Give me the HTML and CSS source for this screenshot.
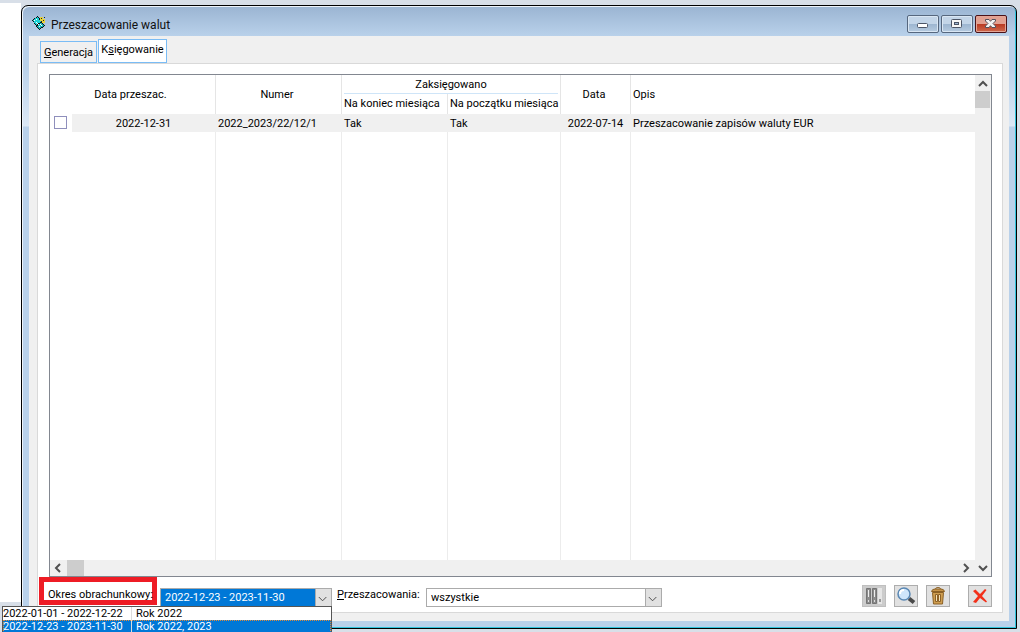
FILE: index.html
```html
<!DOCTYPE html>
<html lang="pl">
<head>
<meta charset="utf-8">
<title>Przeszacowanie walut</title>
<link rel="stylesheet" href="styles.css">
</head>
<body>
<div class="desktop">
  <div class="backdrop"></div>
  <main class="window">
    <header class="titlebar">
      <svg class="app-icon" width="14" height="16" viewBox="0 0 14 16" shape-rendering="crispEdges">
        <path d="M0 5L6 1L10 7L13 11L7 15L4 11Z" fill="#111"/>
        <path d="M1 5L6 2L9 7L4 10Z" fill="#19d3d6"/>
        <path d="M5 11L9 8L12 11L7 14Z" fill="#16b5bb"/>
        <path d="M2 5h1v1h-1zM4 4h1v1h-1zM4 7h1v1h-1zM6 9h1v1h-1zM7 11h1v1h-1zM9 10h1v1h-1zM5 8h1v1h-1zM8 9h1v1h-1z" fill="#fff"/>
        <path d="M8 2h3v2h2v4h-3v-2h-2z" fill="#e8d33a"/>
        <path d="M9 3h1v1h-1zM11 5h1v1h-1zM9 6h1v1h-1zM12 2h1v1h-1z" fill="#222"/>
      </svg>
      <h1 class="title">Przeszacowanie walut</h1>
      <div class="window-buttons">
        <button class="wbtn" type="button" aria-label="Minimalizuj">
          <svg width="12" height="12" viewBox="0 0 12 12"><rect x="0.500" y="5.500" width="10" height="4" rx="1" fill="#fff" stroke="#4c5566"/></svg>
        </button>
        <button class="wbtn" type="button" aria-label="Maksymalizuj">
          <svg width="12" height="12" viewBox="0 0 12 12"><rect x="0.500" y="1.500" width="10" height="8" rx="1" fill="#f7f7f7" stroke="#4c5566"/><rect x="3.500" y="4.500" width="4" height="2" fill="#9db6d3" stroke="#4c5566"/></svg>
        </button>
        <button class="wbtn wbtn-close" type="button" aria-label="Zamknij">
          <svg width="12" height="12" viewBox="0 0 12 12"><path d="M0.500 1.500h3.500L5.500 3.300L7 1.500H10.500V3L8 5.500L10.500 8v1.500H7L5.500 7.700L4 9.500H0.500V8L3 5.500L0.500 3Z" fill="#f4f4f4" stroke="#54515c"/></svg>
        </button>
      </div>
    </header>
    <div class="client">
      <nav class="tabs">
        <button class="tab" type="button"><u>G</u>eneracja</button>
        <button class="tab tab-active" type="button">K<u>s</u>ięgowanie</button>
      </nav>
      <section class="panel">
        <div class="list">
          <div class="list-main">
            <table class="grid">
              <colgroup>
                <col class="c-check"><col class="c-date"><col class="c-number"><col class="c-end"><col class="c-start"><col class="c-day"><col>
              </colgroup>
              <thead>
                <tr class="head-top">
                  <th colspan="2" rowspan="2" class="wide">Data przeszac.</th>
                  <th rowspan="2" class="number">Numer</th>
                  <th colspan="2" class="group"><span>Zaksięgowano</span></th>
                  <th rowspan="2" class="number">Data</th>
                  <th rowspan="2" class="left">Opis</th>
                </tr>
                <tr class="head-sub">
                  <th class="left">Na koniec miesiąca</th>
                  <th class="left">Na początku miesiąca</th>
                </tr>
              </thead>
              <tbody>
                <tr class="record">
                  <td class="check"><input type="checkbox" aria-label="Zaznacz 2022_2023/22/12/1"></td>
                  <td class="center">2022-12-31</td>
                  <td>2022_2023/22/12/1</td>
                  <td>Tak</td>
                  <td>Tak</td>
                  <td class="center">2022-07-14</td>
                  <td>Przeszacowanie zapisów waluty EUR</td>
                </tr>
                <tr class="filler"><td></td><td></td><td></td><td></td><td></td><td></td><td></td></tr>
              </tbody>
            </table>
            <div class="hscroll">
              <svg width="17" height="16" viewBox="0 0 17 16"><path d="M10 4L6 8L10 12" class="chev"/></svg>
              <span class="thumb-h"></span>
              <svg class="push" width="17" height="16" viewBox="0 0 17 16"><path d="M6 4L10 8L6 12" class="chev"/></svg>
            </div>
          </div>
          <div class="vscroll">
            <svg width="16" height="16" viewBox="0 0 16 16"><path d="M4 11L8 7L12 11" class="chev"/></svg>
            <span class="thumb-v"></span>
            <svg class="push-down" width="16" height="17" viewBox="0 0 16 17"><path d="M4 7L8 11L12 7" class="chev"/></svg>
          </div>
        </div>
        <footer class="bar">
          <label class="marked" for="period">Okres obrachunkowy:</label>
          <div class="combo combo-period">
            <select id="period" class="select select-on">
              <option>2022-12-23 - 2023-11-30</option>
              <option>2022-01-01 - 2022-12-22</option>
            </select>
            <svg class="arrow" width="16" height="17" viewBox="0 0 16 17"><path d="M3 8L7 12L11 8"/></svg>
            <div class="dropdown" role="listbox" aria-label="Okres obrachunkowy">
              <div class="choice" role="option"><span>2022-01-01 - 2022-12-22</span><span class="note">Rok 2022</span></div>
              <div class="choice choice-on" role="option" aria-selected="true"><span>2022-12-23 - 2023-11-30</span><span class="note">Rok 2022, 2023</span></div>
            </div>
          </div>
          <label class="filter-label" for="filter"><u>P</u>rzeszacowania:</label>
          <div class="combo combo-filter">
            <select id="filter" class="select"><option>wszystkie</option></select>
            <svg class="arrow" width="16" height="17" viewBox="0 0 16 17"><path d="M3 8L7 12L11 8"/></svg>
          </div>
          <div class="tools">
            <button class="tool tool-off" type="button" aria-label="Księguj" disabled>
              <svg width="18" height="18" viewBox="0 0 18 18">
                <path d="M1.500 1.500h4v15h-4zM7.500 1.500h4v15h-4z" fill="#8c8c8c" stroke="#747474"/>
                <path d="M13 1h4v16h-4z" fill="#e6e6e6"/>
                <path d="M3 3h1v7h-1zM9 3h1v7h-1z" fill="#eee"/>
                <path d="M3 13h1v2h-1zM9 13h1v2h-1z" fill="#ddd"/><path d="M14 12h2v3h-2z" fill="#999"/>
              </svg>
            </button>
            <button class="tool" type="button" aria-label="Podgląd">
              <svg width="20" height="20" viewBox="0 0 20 20">
                <path d="M13 12.500L18 16.500" stroke="#4a4a4a" stroke-width="4"/>
                <circle cx="8" cy="8" r="6" fill="#cfe6fb" stroke="#5a88b4" stroke-width="1.500"/>
                <path d="M4 8Q4 4 8 4" fill="none" stroke="#fff" stroke-width="2"/>
              </svg>
            </button>
            <button class="tool" type="button" aria-label="Usuń">
              <svg width="18" height="20" viewBox="0 0 18 20">
                <path d="M6.500 3Q6.500 1.500 9 1.500T11.500 3" fill="none" stroke="#8c6125"/>
                <path d="M2.500 5.500Q3 3 6 3h6q3 0 3.500 2.500z" fill="#c79549" stroke="#8c6125"/>
                <path d="M3.500 6.500h11l-1 11.500h-9z" fill="#cf9e50" stroke="#8c6125"/>
                <path d="M6.500 8.500h2v7h-2zM9.500 8.500h2v7h-2z" fill="#f6e2b8" stroke="#8c6125"/>
              </svg>
            </button>
            <button class="tool tool-close" type="button" aria-label="Zamknij okno">
              <svg width="18" height="18" viewBox="0 0 18 18">
                <path d="M2 4L4.500 2.500L9 7L14 2L15.500 3L11 9L16 14.500L15 15.500L9 11L5 16L2 15L7 9Z" fill="#f2301a"/>
              </svg>
            </button>
          </div>
        </footer>
      </section>
    </div>
  </main>
</div>
</body>
</html>
```
FILE: styles.css
```css
* { box-sizing: border-box; }

body {
  margin: 0;
  background: #d8dfe8;
  color: #000;
  font: 11px/14px Roboto, "Liberation Sans", sans-serif;
}

button, select, input { font: inherit; color: inherit; margin: 0; padding: 0; }

.desktop { display: flex; height: 100vh; overflow: hidden; }
.backdrop { width: 21px; margin: 3px 0 30px; background: #fff; }

.window {
  flex: 1;
  min-width: 0;
  display: flex;
  flex-direction: column;
  margin: 5px 3px 3px 0;
  padding: 0 7px 7px 7px;
  border: 1px solid #000;
  border-radius: 7px 7px 0 0;
  background: linear-gradient(#9ab4d2, #b9d1ea 30px, #b9d1ea 60px, #dce8f5 120px, #b9d1ea 121px);
  box-shadow: inset 1px 1px #eef4fa, inset -1px -1px #2fc3dc;
}

.titlebar { display: flex; align-items: flex-start; height: 30px; padding: 9px 2px 0 3px; }
.app-icon { margin-right: 5px; }
.title { margin: 2px 0 0; font: 12px/16px Roboto, "Liberation Sans", sans-serif; color: #111; }
.window-buttons { display: flex; gap: 2px; margin-left: auto; }
.wbtn {
  display: flex;
  align-items: center;
  justify-content: center;
  width: 32px;
  height: 18px;
  border: 1px solid #56677e;
  border-radius: 2px;
  background: linear-gradient(#c3d5e8 50%, #9cb5d0 50%, #b6cbe0);
  box-shadow: inset 0 0 0 1px #d9e6f3;
}
.wbtn-close {
  border-color: #4b1218;
  background: linear-gradient(#e2a091 50%, #b93922 50%, #cf6a4d);
  box-shadow: inset 0 0 0 1px #e3a596;
}

.client {
  flex: 1;
  min-height: 0;
  display: flex;
  flex-direction: column;
  padding: 3px 6px 8px 8px;
  background: #f0f0f0;
}

.tabs { display: flex; align-items: flex-end; gap: 1px; padding-left: 3px; }
.tab {
  width: 57px;
  height: 22px;
  padding-top: 2px;
  border: 1px solid #7abcf5;
  background: #f0f0f0;
}
.tab-active { width: 69px; height: 24px; padding: 0 0 2px; background: #fff; }

.panel {
  flex: 1;
  min-height: 0;
  display: flex;
  flex-direction: column;
  padding: 10px 10px 0 11px;
  border: 1px solid #d9d9d9;
  background: #fff;
}

.list { flex: 1; min-height: 0; display: flex; border: 1px solid #828790; }
.list-main { flex: 1; min-width: 0; display: flex; flex-direction: column; }

.grid { flex: 1; width: 100%; table-layout: fixed; border-collapse: separate; border-spacing: 0; }
.c-check { width: 22px; }
.c-date { width: 144px; }
.c-number { width: 126px; }
.c-end { width: 106px; }
.c-start { width: 113px; }
.c-day { width: 70px; }
.grid th, .grid td {
  padding: 0 2px;
  border-right: 1px solid #e5e5e5;
  font-weight: normal;
  text-align: left;
  white-space: nowrap;
}
.grid th { text-align: center; }
.grid th:last-child, .grid td:last-child { border-right: 0; }
.grid .left { text-align: left; }
.grid .head-sub th:last-child { border-right: 1px solid #e5e5e5; }
.grid .wide { padding-right: 6px; }
.grid .number { padding-right: 5px; }
.grid .center { text-align: center; }
.head-top { height: 19px; }
.group span { display: block; height: 19px; line-height: 20px; border-bottom: 1px solid #cfe5f8; }
.head-sub { height: 20px; }
.record { height: 18px; }
.grid .record td { padding-top: 2px; background: #f0f0f0; border-right-color: #f0f0f0; }
.grid .record .check { padding: 0 0 2px 4px; background: #fff; border-right: 0; }
.check input {
  display: block;
  appearance: none;
  width: 13px;
  height: 13px;
  border: 1px solid #8f8fbc;
  background: #fff;
}
.filler td { border-right-color: #ececec; }
.filler td:first-child { border-right: 0; }

.hscroll { display: flex; height: 16px; background: #f0f0f0; }
.thumb-h { width: 17px; background: #cdcdcd; }
.push { margin-left: auto; }
.vscroll { display: flex; flex-direction: column; width: 16px; background: #f0f0f0; }
.thumb-v { height: 17px; width: 15px; background: #cdcdcd; }
.push-down { margin-top: auto; }
.chev { fill: none; stroke: #505050; stroke-width: 2; }

.bar { display: flex; align-items: flex-start; height: 35px; }
.marked {
  width: 118px;
  height: 28px;
  margin: 0 3px 0 -10px;
  padding: 6px 0 0 4px;
  border: 5px solid #ee1c25;
  white-space: nowrap;
}
.combo { position: relative; height: 19px; margin-top: 11px; border: 1px solid #ababab; }
.combo-period { width: 172px; }
.combo-filter { width: 236px; }
.select {
  display: block;
  appearance: none;
  width: 100%;
  height: 17px;
  padding-left: 4px;
  border: 0;
  border-radius: 0;
  background: #fff;
}
.select-on { background: #0078d7; color: #fff; }
.arrow {
  position: absolute;
  top: 0;
  right: 0;
  width: 16px;
  height: 17px;
  background: #e1e1e1;
  border-left: 1px solid #ababab;
  pointer-events: none;
}
.arrow path { fill: none; stroke: #444; }
.dropdown {
  position: absolute;
  top: 17px;
  right: -1px;
  z-index: 2;
  width: 330px;
  border: 1px solid #555;
  background: #fff;
}
.choice { display: grid; grid-template-columns: 128px 1fr; height: 13px; line-height: 14px; }
.choice-on { background: #0078d7; color: #fff; outline: 1px dotted #e08a3a; outline-offset: -1px; }
.note { padding-left: 4px; border-left: 1px solid #dcdcdc; }
.filter-label { width: 89px; margin: 11px 0 0 5px; }
.tools { display: flex; gap: 8px; margin: 8px 0 0 auto; }
.tool {
  display: flex;
  align-items: center;
  justify-content: center;
  width: 24px;
  height: 22px;
  border: 1px solid #adadad;
  background: #e1e1e1;
}
.tool-off { background: #ccc; border-color: #bfbfbf; }
.tool-close { margin-left: 10px; }
```
